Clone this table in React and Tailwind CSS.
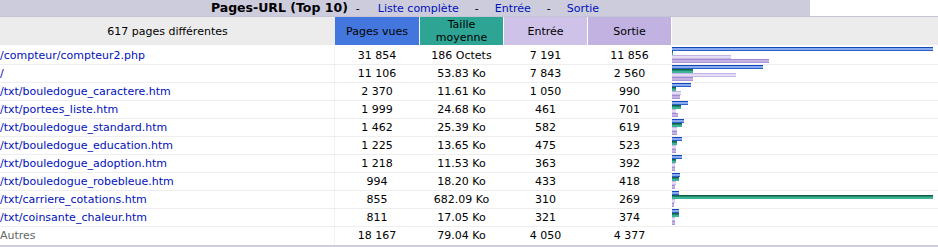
import React from "react";

const rows = [
  { url: "/compteur/compteur2.php", pages: 31854, size: "186 Octets", ko: 0.18, entry: 7191, exit: 11856 },
  { url: "/", pages: 11106, size: "53.83 Ko", ko: 53.83, entry: 7843, exit: 2560 },
  { url: "/txt/bouledogue_caractere.htm", pages: 2370, size: "11.61 Ko", ko: 11.61, entry: 1050, exit: 990 },
  { url: "/txt/portees_liste.htm", pages: 1999, size: "24.68 Ko", ko: 24.68, entry: 461, exit: 701 },
  { url: "/txt/bouledogue_standard.htm", pages: 1462, size: "25.39 Ko", ko: 25.39, entry: 582, exit: 619 },
  { url: "/txt/bouledogue_education.htm", pages: 1225, size: "13.65 Ko", ko: 13.65, entry: 475, exit: 523 },
  { url: "/txt/bouledogue_adoption.htm", pages: 1218, size: "11.53 Ko", ko: 11.53, entry: 363, exit: 392 },
  { url: "/txt/bouledogue_robebleue.htm", pages: 994, size: "18.20 Ko", ko: 18.2, entry: 433, exit: 418 },
  { url: "/txt/carriere_cotations.htm", pages: 855, size: "682.09 Ko", ko: 682.09, entry: 310, exit: 269 },
  { url: "/txt/coinsante_chaleur.htm", pages: 811, size: "17.05 Ko", ko: 17.05, entry: 321, exit: 374 },
];

const fmt = (n) => n.toLocaleString("fr-FR").replace(/\s/g, " ");

// bars: hits / entry / exit share one scale, size has its own
const MAXW = 261;
const hitScale = MAXW / 31854;
const koScale = MAXW / 682.09;

const Bar = ({ width, color }) => (
  <div className={`h-[4px] ${color}`} style={{ width: Math.max(1, Math.round(width)) }} />
);

const App = () => {
  return (
    <div className="w-[938px] bg-white text-[11px] text-black" style={{ fontFamily: '"DejaVu Sans", Verdana, sans-serif' }}>
      <div className="flex h-[16px]">
        <div className="flex w-[810px] items-center justify-center bg-[#ccccdd] leading-none">
          <span className="text-[12.5px] font-bold text-black">Pages-URL (Top 10)</span>
          <span className="ml-[8px]">-</span>
          <a className="ml-[18px] text-[#0011bb]">Liste complète</a>
          <span className="ml-[16px]">-</span>
          <a className="ml-[16px] text-[#0011bb]">Entrée</a>
          <span className="ml-[16px]">-</span>
          <a className="ml-[16px] text-[#0011bb]">Sortie</a>
        </div>
        <div className="flex-1" />
      </div>
      <div className="h-px bg-[#c4c4d4]" />
      <div className="flex h-[28px] text-center leading-[13px]">
        <div className="flex w-[335px] items-center justify-center bg-[#ececec]">617 pages différentes</div>
        <div className="flex w-[84px] items-center justify-center bg-[#4477dd]">Pages vues</div>
        <div className="ml-px flex w-[83px] items-center justify-center bg-[#2ea495]">
          Taille
          <br />
          moyenne
        </div>
        <div className="ml-px flex w-[83px] items-center justify-center bg-[#cec2e8]">Entrée</div>
        <div className="ml-px flex w-[83px] items-center justify-center bg-[#c1b2e2]">Sortie</div>
        <div className="ml-px flex-1 bg-[#ececec]" />
      </div>
      <div className="h-[2px]" />
      {rows.map((r) => (
        <div key={r.url} className="flex h-[18px] border-b border-[#eeeeee] text-center">
          <div className="flex w-[335px] items-center border-r border-[#f2f2f2] pt-px text-left text-[#0011bb]">{r.url}</div>
          <div className="flex w-[84px] items-center justify-center pt-px">{fmt(r.pages)}</div>
          <div className="ml-px flex w-[83px] items-center justify-center pt-px">{r.size}</div>
          <div className="ml-px flex w-[83px] items-center justify-center pt-px">{fmt(r.entry)}</div>
          <div className="ml-px flex w-[83px] items-center justify-center pt-px">{fmt(r.exit)}</div>
          <div className="flex flex-1 flex-col pl-px">
            <Bar width={r.pages * hitScale} color="bg-[linear-gradient(#1447b8_0_1px,#88aaee_1px_3px,#2a5fcc_3px)]" />
            <Bar width={r.ko * koScale} color="bg-[linear-gradient(#15604a_0_1px,#1f8a6a_1px_2px,#3cb497_2px)]" />
            <Bar width={r.entry * hitScale} color="bg-[linear-gradient(#c4b4e6_0_1px,#e4dcf4_1px_3px,#c9bbe8_3px)]" />
            <Bar width={r.exit * hitScale} color="bg-[linear-gradient(#a48cd2_0_1px,#c4b2e4_1px_3px,#ab95d6_3px)]" />
          </div>
        </div>
      ))}
      <div className="flex h-[18px] text-center">
        <div className="flex w-[335px] items-center border-r border-[#f2f2f2] pt-px text-left text-[#666666]">Autres</div>
        <div className="flex w-[84px] items-center justify-center pt-px">18 167</div>
        <div className="ml-px flex w-[83px] items-center justify-center pt-px">79.04 Ko</div>
        <div className="ml-px flex w-[83px] items-center justify-center pt-px">4 050</div>
        <div className="ml-px flex w-[83px] items-center justify-center pt-px">4 377</div>
        <div className="flex-1" />
      </div>
      <div className="h-[2px] bg-[#ccccdd]" />
    </div>
  );
};

export default App;
